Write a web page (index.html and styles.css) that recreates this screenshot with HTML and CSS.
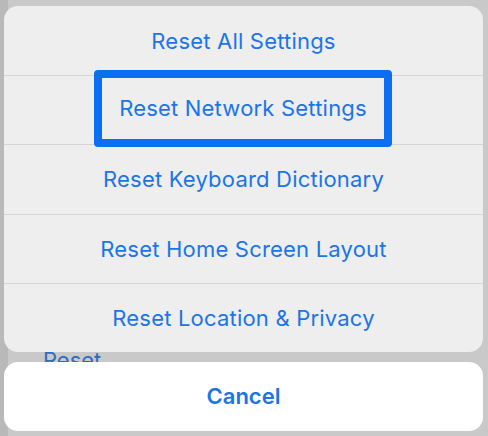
FILE: index.html
```html
<!DOCTYPE html>
<html>
<head>
<meta charset="utf-8">
<link rel="stylesheet" href="styles.css">
</head>
<body>
<div class="page">
  <div class="under">
    <div class="under-card">
      <span class="under-text">Reset</span>
    </div>
  </div>
  <div class="sheet">
    <div class="group">
      <div class="row">Reset All Settings</div>
      <div class="row"><span class="highlight">Reset Network Settings</span></div>
      <div class="row">Reset Keyboard Dictionary</div>
      <div class="row">Reset Home Screen Layout</div>
      <div class="row">Reset Location &amp; Privacy</div>
    </div>
    <div class="cancel">Cancel</div>
  </div>
</div>
</body>
</html>
```
FILE: styles.css
```css
* { box-sizing: border-box; }
html, body { margin: 0; padding: 0; }
body {
  width: 488px;
  height: 436px;
  overflow: hidden;
  font-family: "Inter", "Roboto", "Liberation Sans", sans-serif;
  background: #c4c4c4;
}
.page {
  position: relative;
  width: 488px;
  height: 436px;
}
.under {
  height: 436px;
  padding-left: 8px;
  background: #b9b9b9;
}
.under-card {
  height: 100%;
  background: #c9c9c9;
  padding: 347px 0 0 35px;
}
.under-text {
  color: #2f6cc0;
  font-size: 22px;
}
.sheet {
  position: absolute;
  left: 4px;
  top: 6px;
  width: 479px;
  display: flex;
  flex-direction: column;
  gap: 10px;
}
.group {
  background: #eeeeee;
  border-radius: 14px;
  overflow: hidden;
}
.row {
  height: 69.2px;
  display: flex;
  align-items: center;
  justify-content: center;
  color: #1a75e8;
  font-size: 22px;
  letter-spacing: 0.2px;
  border-top: 1px solid #d6d6d6;
}
.row:first-child { border-top: none; }
.highlight {
  display: flex;
  align-items: center;
  justify-content: center;
  width: 298px;
  height: 77px;
  border: 8px solid #0b6ff2;
  border-radius: 4px;
  margin-top: -4px;
  margin-left: -1px;
}
.cancel {
  height: 69px;
  background: #ffffff;
  border-radius: 14px;
  display: flex;
  align-items: center;
  justify-content: center;
  color: #1a75e8;
  font-size: 22px;
  font-weight: 600;
}
```
